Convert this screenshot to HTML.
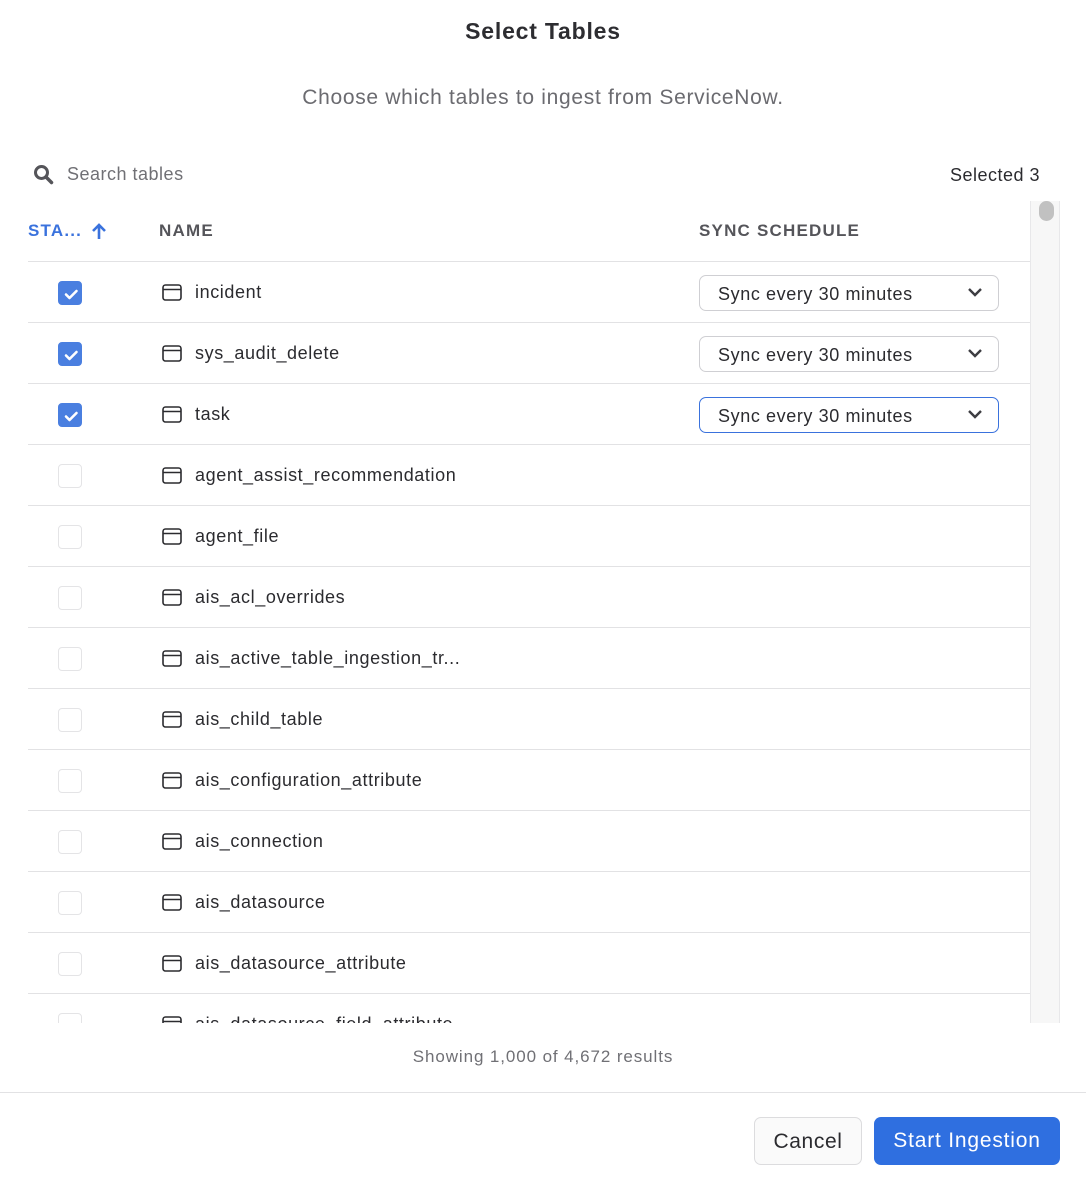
<!DOCTYPE html>
<html><head><style>
*{box-sizing:border-box;margin:0;padding:0}
body{width:1086px;height:1180px;background:#fff;font-family:"Liberation Sans",sans-serif;color:#2b2b2f;position:relative;overflow:hidden;letter-spacing:0.45px}
.abs{position:absolute}
.title{left:0;width:1086px;top:18px;text-align:center;font-size:23px;font-weight:bold;color:#2d2d31;letter-spacing:0.8px}
.sub{left:0;width:1086px;top:86px;text-align:center;font-size:21px;color:#6b6b70;letter-spacing:0.7px}
.hdr{font-size:17px;font-weight:bold;letter-spacing:1.2px;color:#55555a;top:221px}
.row{position:absolute;left:28px;width:1002px;height:61px;border-top:1px solid #e2e2e4}
.cb{position:absolute;left:30px;top:19px;width:24px;height:24px;border-radius:4px;border:1px solid #e4e4e6;background:#fff}
.cb.on{background:#4a7fe0;border-color:#4a7fe0}
.ic{position:absolute;left:134px;top:22px}
.nm{position:absolute;left:167px;top:20px;font-size:18px;color:#2b2b2f;letter-spacing:0.6px}
.dd{position:absolute;left:671px;top:13px;width:300px;height:36px;border:1px solid #cfcfd3;border-radius:7px;font-size:18px;padding:8px 0 0 18px;color:#2b2b2f;letter-spacing:0.6px}
.dd svg{position:absolute;right:15px;top:11px}
.clip{position:absolute;left:0;top:261px;width:1086px;height:762px;overflow:hidden}
</style></head><body>
<div class="abs title">Select Tables</div>
<div class="abs sub">Choose which tables to ingest from ServiceNow.</div>
<svg class="abs" style="left:33px;top:164px" width="21" height="21" viewBox="0 0 21 21"><circle cx="8.5" cy="8.5" r="6" fill="none" stroke="#55555a" stroke-width="3"/><path d="M13 13l5.5 5.5" stroke="#55555a" stroke-width="3.5" stroke-linecap="round"/></svg>
<div class="abs" style="left:67px;top:164px;font-size:18px;color:#707075;letter-spacing:0.5px">Search tables</div>
<div class="abs" style="left:950px;top:165px;font-size:18px;color:#2b2b2f;letter-spacing:0.5px">Selected 3</div>
<div class="abs hdr" style="left:28px;color:#3a72dd">STA...</div>
<svg class="abs" style="left:90px;top:222px" width="18" height="18" viewBox="0 0 18 18"><path d="M9 17V3M3 9l6-6 6 6" fill="none" stroke="#3a72dd" stroke-width="2.6"/></svg>
<div class="abs hdr" style="left:159px">NAME</div>
<div class="abs hdr" style="left:699px">SYNC SCHEDULE</div>
<div class="abs" style="left:1030px;top:201px;width:30px;height:822px;background:#f7f7f7;border-left:1px solid #e8e8ea;border-right:1px solid #e8e8ea"></div>
<div class="abs" style="left:1039px;top:201px;width:15px;height:20px;border-radius:8px;background:#c1c1c1"></div>
<div class="clip" id="c"></div>
<div class="abs" style="left:0;width:1086px;top:1047px;text-align:center;font-size:17px;color:#707075;letter-spacing:0.9px">Showing 1,000 of 4,672 results</div>
<div class="abs" style="left:0;top:1092px;width:1086px;height:1px;background:#e2e2e4"></div>
<div class="abs" style="left:754px;top:1117px;width:108px;height:48px;border:1px solid #dcdcde;border-radius:7px;background:#fafafa;font-size:21px;text-align:center;padding-top:12px;color:#2b2b2f;letter-spacing:0.6px">Cancel</div>
<div class="abs" style="left:874px;top:1117px;width:186px;height:48px;border-radius:7px;background:#2f6fe0;font-size:21px;text-align:center;padding-top:12px;color:#fff;letter-spacing:0.8px">Start Ingestion</div>
<script>
var n=["incident","sys_audit_delete","task","agent_assist_recommendation","agent_file","ais_acl_overrides","ais_active_table_ingestion_tr...","ais_child_table","ais_configuration_attribute","ais_connection","ais_datasource","ais_datasource_attribute","ais_datasource_field_attribute"];
var h="";
var ic='<svg class="ic" width="20" height="17" viewBox="0 0 20 17"><rect x="1" y="1" width="18" height="15" rx="2.5" fill="none" stroke="#2b2b2f" stroke-width="1.6"/><path d="M1 5.5h18" stroke="#2b2b2f" stroke-width="1.6"/></svg>';
var chk='<svg width="24" height="24" viewBox="0 0 24 24"><path d="M7 12.5l3.5 3.5 7-7" fill="none" stroke="#fff" stroke-width="2.6" stroke-linecap="round" stroke-linejoin="round"/></svg>';
var arr='<svg width="16" height="10" viewBox="0 0 16 10"><path d="M2 2l6 6 6-6" fill="none" stroke="#3d3d42" stroke-width="2.4"/></svg>';
n.forEach(function(t,i){
 var on=i<3;
 h+='<div class="row" style="top:'+(i*61)+'px"><div class="cb'+(on?' on':'')+'">'+(on?chk:'')+'</div>'+ic+'<div class="nm">'+t+'</div>'+(on?'<div class="dd"'+(i==2?' style="border-color:#3a72dd"':'')+'>Sync every 30 minutes'+arr+'</div>':'')+'</div>';
});
document.getElementById('c').innerHTML=h;
</script>
</body></html>
